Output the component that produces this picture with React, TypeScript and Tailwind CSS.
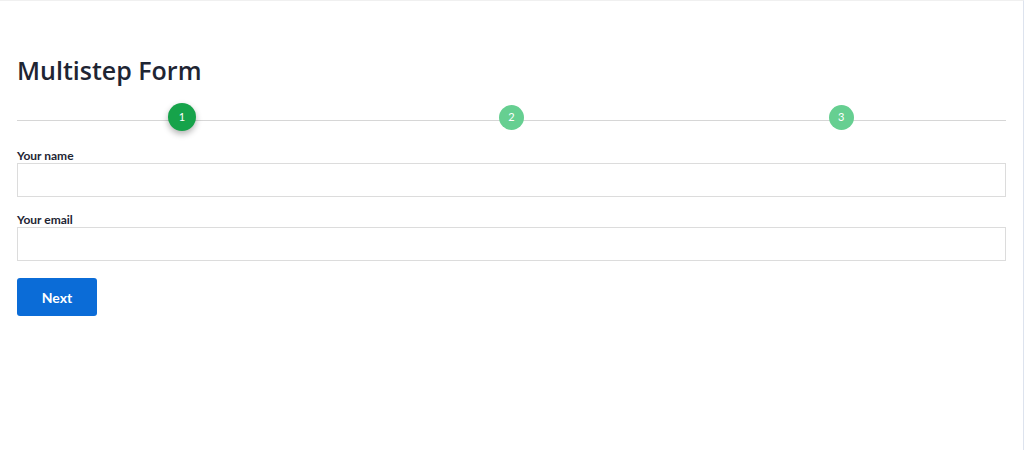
import { useState } from 'react';

const steps = [1, 2, 3];

export default function App() {
  const [step] = useState(1);
  const [name, setName] = useState('');
  const [email, setEmail] = useState('');

  return (
    <div className="min-h-[450px] w-[1024px] bg-white border-t border-t-[#f0f0f0] border-r border-r-[#dde3ee] font-['Lato','Liberation_Sans',sans-serif] text-[#212529]">
      <div className="px-[17px] pt-[53px]">
        <h1 className="text-[25px] leading-[32px] font-semibold text-[#1e2533] font-['Open_Sans','Liberation_Sans',sans-serif]">
          Multistep Form
        </h1>

        {/* Stepper */}
        <div className="relative mt-[17px] grid grid-cols-3 h-[28px] items-center">
          <div className="absolute left-0 right-0 top-[17px] h-px bg-[#d6d6d6]"></div>
          {steps.map((s) => (
            <div key={s} className="relative flex justify-center">
              {s === step ? (
                <div className="w-[28px] h-[28px] rounded-full bg-[#16a34a] text-white text-[11px] flex items-center justify-center shadow-[0_3px_6px_rgba(0,0,0,0.3)]">
                  {s}
                </div>
              ) : (
                <div className="w-[25px] h-[25px] rounded-full bg-[#66cf91] text-white text-[11px] flex items-center justify-center">
                  {s}
                </div>
              )}
            </div>
          ))}
        </div>

        <form className="mt-[17px]" onSubmit={(e) => e.preventDefault()}>
          <label className="block text-[12px] font-bold leading-[15px] text-[#1e2533]">Your name</label>
          <input
            value={name}
            onChange={(e) => setName(e.target.value)}
            className="block w-full h-[34px] border border-[#dcdcdc] outline-none px-2 text-sm"
          />
          <label className="block mt-[15px] text-[12px] font-bold leading-[15px] text-[#1e2533]">Your email</label>
          <input
            value={email}
            onChange={(e) => setEmail(e.target.value)}
            className="block w-full h-[34px] border border-[#dcdcdc] outline-none px-2 text-sm"
          />
          <button
            type="submit"
            className="mt-[17px] w-[80px] h-[38px] rounded-[3px] bg-[#0b6cd7] text-white text-[14px] font-bold"
          >
            Next
          </button>
        </form>
      </div>
    </div>
  );
}
